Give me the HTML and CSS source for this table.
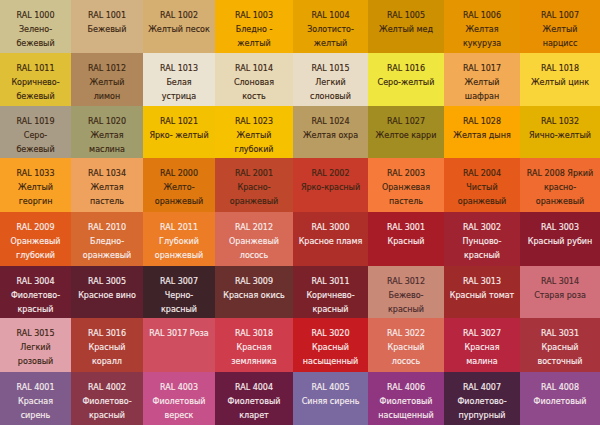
FILE: index.html
```html
<!DOCTYPE html>
<html lang="ru">
<head>
<meta charset="utf-8">
<link rel="stylesheet" href="styles.css">
</head>
<body>
<div class="grid">
  <div class="c d" style="background:#cdc28f">RAL 1000<br>Зелено-<br>бежевый</div>
  <div class="c d" style="background:#d2b283">RAL 1001<br>Бежевый</div>
  <div class="c d" style="background:#d5ae72">RAL 1002<br>Желтый песок</div>
  <div class="c d" style="background:#f6b000">RAL 1003<br>Бледно -<br>желтый</div>
  <div class="c d" style="background:#e6a300">RAL 1004<br>Золотисто-<br>желтый</div>
  <div class="c d" style="background:#cc9000">RAL 1005<br>Желтый мед</div>
  <div class="c d" style="background:#e59500">RAL 1006<br>Желтая<br>кукуруза</div>
  <div class="c d" style="background:#e89000">RAL 1007<br>Желтый<br>нарцисс</div>

  <div class="c d" style="background:#dfbf35">RAL 1011<br>Коричнево-<br>бежевый</div>
  <div class="c d" style="background:#b0875a">RAL 1012<br>Желтый<br>лимон</div>
  <div class="c d" style="background:#ebe3d2">RAL 1013<br>Белая<br>устрица</div>
  <div class="c d" style="background:#e7d8b6">RAL 1014<br>Слоновая<br>кость</div>
  <div class="c d" style="background:#e9dcc6">RAL 1015<br>Легкий<br>слоновый</div>
  <div class="c d" style="background:#efe63f">RAL 1016<br>Серо-желтый</div>
  <div class="c d" style="background:#f3aa55">RAL 1017<br>Желтый<br>шафран</div>
  <div class="c d" style="background:#fad53a">RAL 1018<br>Желтый цинк</div>

  <div class="c d" style="background:#a99c86">RAL 1019<br>Серо-<br>бежевый</div>
  <div class="c d" style="background:#a19c6c">RAL 1020<br>Желтая<br>маслина</div>
  <div class="c d" style="background:#f4c100">RAL 1021<br>Ярко- желтый</div>
  <div class="c d" style="background:#f6c200">RAL 1023<br>Желтый<br>глубокий</div>
  <div class="c d" style="background:#b99c62">RAL 1024<br>Желтая охра</div>
  <div class="c d" style="background:#a28d22">RAL 1027<br>Желтое карри</div>
  <div class="c d" style="background:#fca700">RAL 1028<br>Желтая дыня</div>
  <div class="c d" style="background:#e3b200">RAL 1032<br>Яично-желтый</div>

  <div class="c d" style="background:#f9a125">RAL 1033<br>Желтый<br>георгин</div>
  <div class="c d" style="background:#efa25e">RAL 1034<br>Желтая<br>пастель</div>
  <div class="c d" style="background:#de780f">RAL 2000<br>Желто-<br>оранжевый</div>
  <div class="c d" style="background:#bf472c">RAL 2001<br>Красно-<br>оранжевый</div>
  <div class="c d" style="background:#c83b2b">RAL 2002<br>Ярко-красный</div>
  <div class="c d" style="background:#f67b3a">RAL 2003<br>Оранжевая<br>пастель</div>
  <div class="c d" style="background:#e5591a">RAL 2004<br>Чистый<br>оранжевый</div>
  <div class="c d" style="background:#ef6b30">RAL 2008 Яркий<br>красно-<br>оранжевый</div>

  <div class="c w" style="background:#e1591a">RAL 2009<br>Оранжевый<br>глубокий</div>
  <div class="c w" style="background:#d6692f">RAL 2010<br>Бледно-<br>оранжевый</div>
  <div class="c w" style="background:#ec7c25">RAL 2011<br>Глубокий<br>оранжевый</div>
  <div class="c w" style="background:#d76a57">RAL 2012<br>Оранжевый<br>лосось</div>
  <div class="c w" style="background:#ae2f2a">RAL 3000<br>Красное пламя</div>
  <div class="c w" style="background:#a81c28">RAL 3001<br>Красный</div>
  <div class="c w" style="background:#9f2330">RAL 3002<br>Пунцово-<br>красный</div>
  <div class="c w" style="background:#8b1a2c">RAL 3003<br>Красный рубин</div>

  <div class="c w" style="background:#6c1e30">RAL 3004<br>Фиолетово-<br>красный</div>
  <div class="c w" style="background:#5e1f2f">RAL 3005<br>Красное вино</div>
  <div class="c w" style="background:#3e2329">RAL 3007<br>Черно-<br>красный</div>
  <div class="c w" style="background:#69302d">RAL 3009<br>Красная окись</div>
  <div class="c w" style="background:#7a2129">RAL 3011<br>Коричнево-<br>красный</div>
  <div class="c g" style="background:#c88977">RAL 3012<br>Бежево-<br>красный</div>
  <div class="c w" style="background:#9e2a29">RAL 3013<br>Красный томат</div>
  <div class="c g" style="background:#d1707a">RAL 3014<br>Старая роза</div>

  <div class="c d" style="background:#e0a1ab">RAL 3015<br>Легкий<br>розовый</div>
  <div class="c w" style="background:#ab3d33">RAL 3016<br>Красный<br>коралл</div>
  <div class="c w" style="background:#cf4f61">RAL 3017 Роза</div>
  <div class="c w" style="background:#cf3c4c">RAL 3018<br>Красная<br>земляника</div>
  <div class="c w" style="background:#c61b20">RAL 3020<br>Красный<br>насыщенный</div>
  <div class="c w" style="background:#d96b57">RAL 3022<br>Красный<br>лосось</div>
  <div class="c w" style="background:#b7253f">RAL 3027<br>Красная<br>малина</div>
  <div class="c w" style="background:#a7333c">RAL 3031<br>Красный<br>восточный</div>

  <div class="c w" style="background:#7e5b8a">RAL 4001<br>Красная<br>сирень</div>
  <div class="c w" style="background:#893748">RAL 4002<br>Фиолетово-<br>красный</div>
  <div class="c w" style="background:#c6508a">RAL 4003<br>Фиолетовый<br>вереск</div>
  <div class="c w" style="background:#6a1b40">RAL 4004<br>Фиолетовый<br>кларет</div>
  <div class="c w" style="background:#7a69a1">RAL 4005<br>Синяя сирень</div>
  <div class="c w" style="background:#903681">RAL 4006<br>Фиолетовый<br>насыщенный</div>
  <div class="c w" style="background:#4a2340">RAL 4007<br>Фиолетово-<br>пурпурный</div>
  <div class="c w" style="background:#8f4a8b">RAL 4008<br>Фиолетовый</div>
</div>
</body>
</html>
```
FILE: styles.css
```css
html, body {
  margin: 0;
  padding: 0;
  width: 600px;
  height: 425px;
  overflow: hidden;
}
.grid {
  display: grid;
  grid-template-columns: 71px 72px 72px 78px 75px 76px 76px 80px;
  grid-template-rows: 53px 53px 52px 54px 54px 52px 54px 53px;
  width: 600px;
  height: 425px;
}
.c {
  font-family: "DejaVu Sans", Verdana, sans-serif;
  font-size: 8px;
  line-height: 13.8px;
  text-align: center;
  padding-top: 9px;
  box-sizing: border-box;
  white-space: nowrap;
  overflow: hidden;
  -webkit-text-stroke: 0.15px currentColor;
}
.d { color: #3a2613; }
.w { color: #f6eeee; }
.g { color: #4a2a2c; }
```
